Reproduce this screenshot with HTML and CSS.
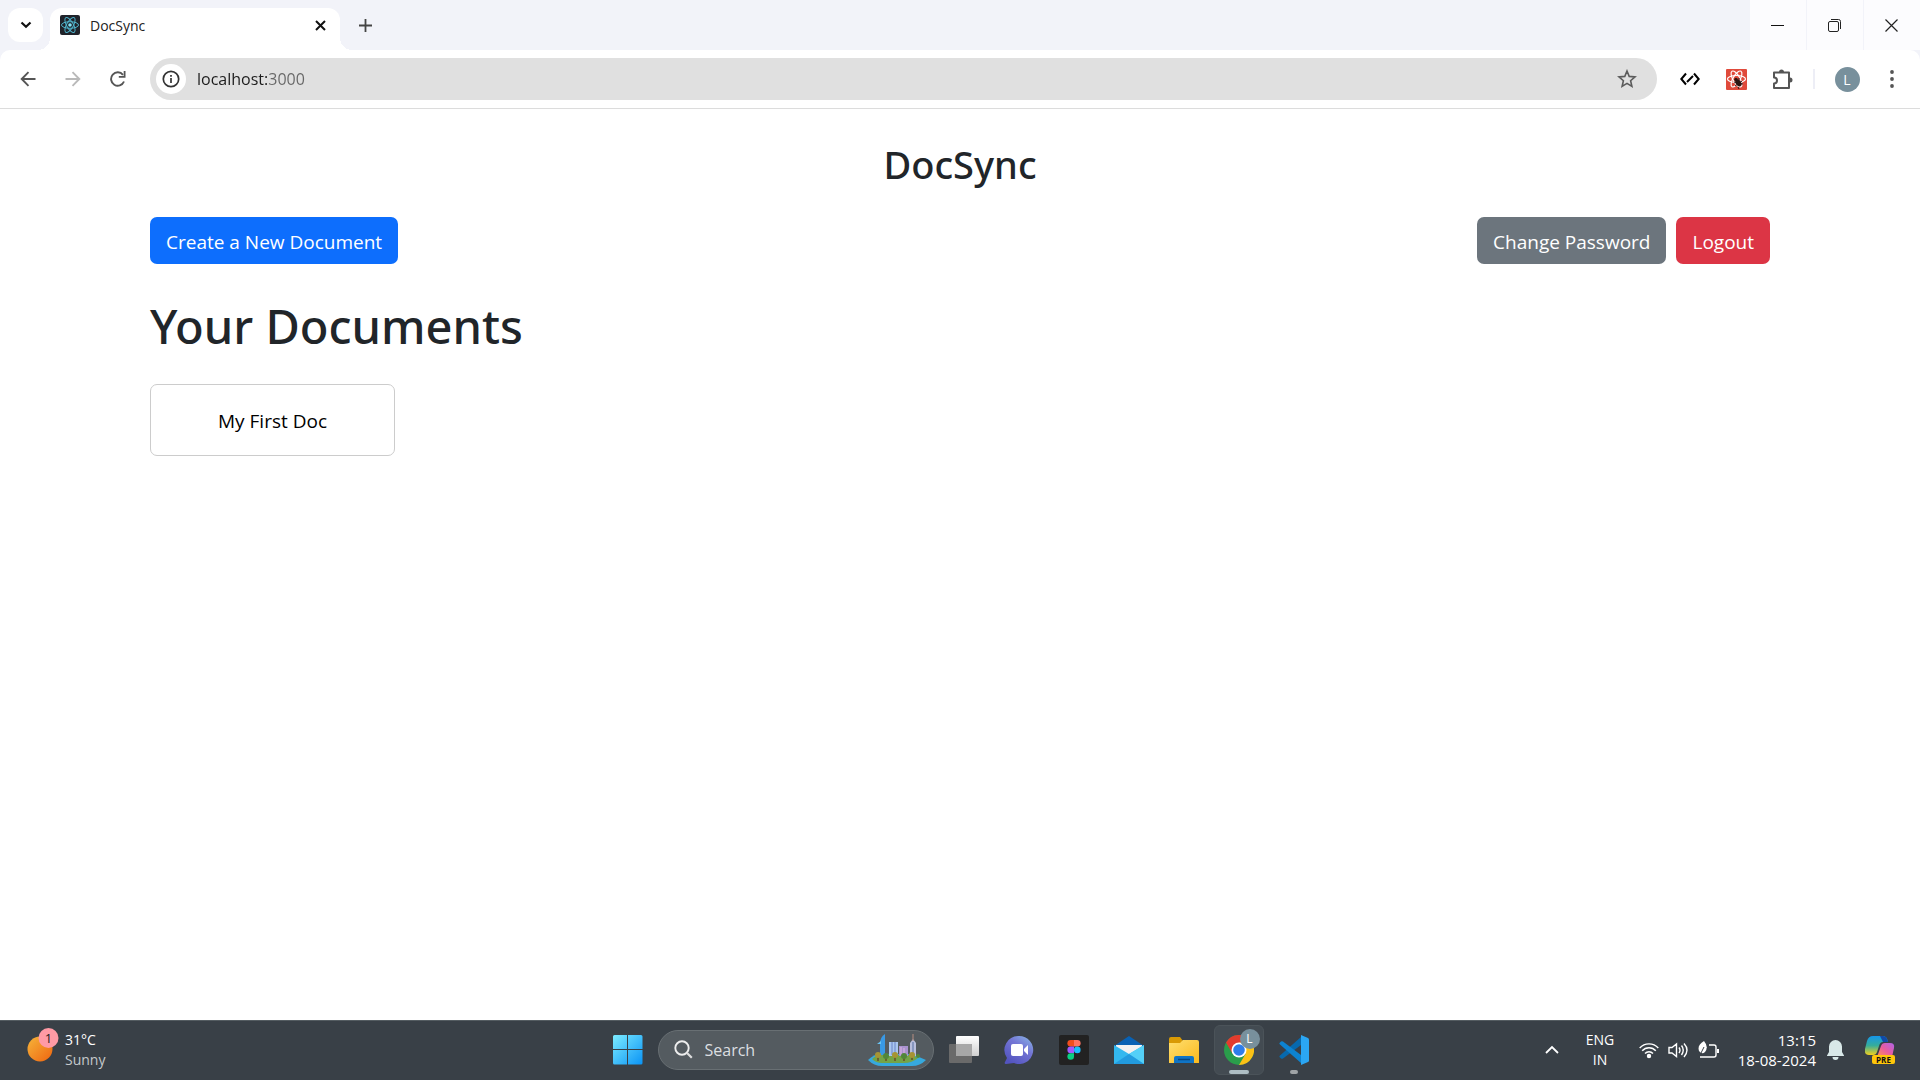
FILE: index.html
```html
<!DOCTYPE html>
<html lang="en">
<head>
<meta charset="utf-8">
<title>DocSync</title>
<link rel="stylesheet" href="styles.css">
</head>
<body>
<div class="screen">
  <header class="tab-strip">
    <button class="tab-search" aria-label="Search tabs"><svg width="12" height="8" viewBox="0 0 12 8"><path d="M1.5 1.5 6 5.8l4.500-4.300" fill="none" stroke="#111" stroke-width="2.200"/></svg></button>
    <div class="tab">
      <svg width="20" height="20" viewBox="0 0 20 20"><rect width="20" height="20" rx="2" fill="#20232a"/><g fill="none" stroke="#4fb3cb" stroke-width="1"><ellipse cx="10" cy="10" rx="8.500" ry="3.300"/><ellipse cx="10" cy="10" rx="8.500" ry="3.300" transform="rotate(60 10 10)"/><ellipse cx="10" cy="10" rx="8.500" ry="3.300" transform="rotate(120 10 10)"/></g><circle cx="10" cy="10" r="1.800" fill="#7fe0f5"/></svg>
      <span class="tab-title">DocSync</span>
      <button class="icon-button tab-close" aria-label="Close tab"><svg width="11" height="11" viewBox="0 0 11 11"><path d="M1 1l9 9M10 1l-9 9" stroke="#111" stroke-width="2"/></svg></button>
    </div>
    <button class="icon-button new-tab" aria-label="New tab"><svg width="13" height="13" viewBox="0 0 13 13"><path d="M6.500 0v13M0 6.500h13" stroke="#444" stroke-width="1.800"/></svg></button>
    <div class="window-controls">
      <button aria-label="Minimize"><svg width="13" height="13" viewBox="0 0 13 13"><path d="M0 6.500h13" stroke="#111"/></svg></button>
      <button aria-label="Restore"><svg width="13" height="13" viewBox="0 0 13 13" fill="none" stroke="#222"><rect x=".5" y="2.500" width="10" height="10" rx="1.500"/><path d="M3 .5h7.500a2 2 0 0 1 2 2V10"/></svg></button>
      <button aria-label="Close"><svg width="13" height="13" viewBox="0 0 13 13"><path d="M.5.5l12 12M12.500.5l-12 12" stroke="#222" stroke-width="1.200"/></svg></button>
    </div>
  </header>

  <div class="toolbar-back">
  <nav class="toolbar">
    <button class="icon-button nav-button" aria-label="Back"><svg width="16" height="16" viewBox="0 0 16 16"><path d="M15.500 8H2M8.500 1.200 1.700 8l6.800 6.800" fill="none" stroke="#555" stroke-width="1.900"/></svg></button>
    <button class="icon-button nav-button" aria-label="Forward"><svg width="16" height="16" viewBox="0 0 16 16"><path d="M.5 8H14M7.500 1.200 14.300 8l-6.800 6.800" fill="none" stroke="#b9b9b9" stroke-width="1.900"/></svg></button>
    <button class="icon-button nav-button" aria-label="Reload"><svg width="16" height="16" viewBox="0 0 16 16"><path d="M14 10.500A6.700 6.700 0 1 1 13 3.800" fill="none" stroke="#555" stroke-width="1.900"/><path d="M15.500 0v6.700H8.800V4.900h4.900V0z" fill="#555"/></svg></button>
    <div class="omnibox">
      <button class="site-info" aria-label="Site information"><svg width="18" height="18" viewBox="0 0 18 18"><circle cx="9" cy="9" r="7.700" fill="none" stroke="#333" stroke-width="1.700"/><path d="M9 8v5M9 5v1.700" stroke="#333" stroke-width="1.700"/></svg></button>
      <input class="address" type="text" aria-label="Address" value="localhost:3000">
      <button class="icon-button bookmark" aria-label="Bookmark"><svg width="20" height="20" viewBox="0 0 20 20"><path d="M10 2l2.200 5.400 5.800.5-4.400 3.800 1.300 5.700L10 14.400l-4.900 3 1.300-5.700L2 7.900l5.800-.5z" fill="none" stroke="#5c5c5c" stroke-width="1.600"/></svg></button>
    </div>
    <div class="extensions">
      <button class="icon-button extension" aria-label="Inspect"><svg width="20" height="14" viewBox="0 0 20 14"><path d="M6 1.500 1.300 7 6 12.500M14 1.500l4.700 5.500-4.700 5.500" fill="none" stroke="#000" stroke-width="2"/><path d="M7 10l6-6" fill="none" stroke="#000" stroke-width="2"/></svg></button>
      <button class="icon-button extension" aria-label="React Developer Tools"><svg width="21" height="21" viewBox="0 0 21 21"><rect width="21" height="21" rx="1" fill="#e04a3b"/><g fill="none" stroke="#fff" stroke-width="1.200"><ellipse cx="10.500" cy="10" rx="9" ry="3.500"/><ellipse cx="10.500" cy="10" rx="9" ry="3.500" transform="rotate(60 10.500 10)"/><ellipse cx="10.500" cy="10" rx="9" ry="3.500" transform="rotate(120 10.500 10)"/></g><ellipse cx="12.500" cy="14" rx="2.600" ry="3.800" transform="rotate(-35 12.500 14)" fill="#2b1512"/><circle cx="10" cy="10.500" r="1.800" fill="#2b1512"/><path d="M8 13l9 2M9 17l7-5M12 18l1 2M13 9v3" stroke="#2b1512"/></svg></button>
      <button class="icon-button extension" aria-label="Extensions"><svg width="21" height="21" viewBox="0 0 21 21"><path d="M2 3.500h15v15.500H2v-4.500a3 3 0 0 0 0-6z" fill="none" stroke="#555" stroke-width="2" stroke-linejoin="round"/><path d="M7 3a2.500 2.500 0 0 1 5 0M18 8.500a2.500 2.500 0 0 1 0 5" fill="#555"/></svg></button>
      <span class="divider"></span>
      <button class="icon-button profile" aria-label="Profile"><span class="avatar">L</span></button>
      <button class="icon-button menu" aria-label="Menu"><svg width="4" height="18" viewBox="0 0 4 18" fill="#555"><circle cx="2" cy="2" r="1.900"/><circle cx="2" cy="9" r="1.900"/><circle cx="2" cy="16" r="1.900"/></svg></button>
    </div>
  </nav>
  </div>

  <main class="page">
    <h2 class="brand">DocSync</h2>
    <div class="actions">
      <button class="btn btn-primary">Create a New Document</button>
      <div class="account">
        <button class="btn btn-secondary">Change Password</button>
        <button class="btn btn-danger">Logout</button>
      </div>
    </div>
    <h1 class="heading">Your Documents</h1>
    <div class="documents"><a class="document" href="#">My First Doc</a></div>
  </main>

  <footer class="taskbar">
    <button class="weather">
      <svg width="33" height="36" viewBox="0 0 33 36"><defs><linearGradient id="sun" x1="0" y1="0" x2="1" y2="1"><stop offset="0" stop-color="#f6b53a"/><stop offset="1" stop-color="#ee6410"/></linearGradient></defs><circle cx="13" cy="21" r="12.500" fill="url(#sun)"/><circle cx="21.500" cy="10" r="10" fill="#ff9aa5"/><text x="21.500" y="15" class="badge-text">1</text></svg>
      <span class="weather-text"><span>31°C</span><span class="muted">Sunny</span></span>
    </button>
    <div class="apps">
      <button class="app" aria-label="Start"><svg width="30" height="30" viewBox="0 0 30 30"><defs><linearGradient id="win" x1="0" y1="0" x2="1" y2="1"><stop offset="0" stop-color="#7cecff"/><stop offset="1" stop-color="#0a93f5"/></linearGradient></defs><path d="M0 1.500Q0 0 1.500 0H14v14H0zM15 0h13q1.500 0 1.500 1.500V14H15zM0 15h14v14.500H1.500Q0 29.500 0 28zM15 15h14.500v13q0 1.500-1.500 1.500H15z" fill="url(#win)"/></svg></button>
      <label class="search">
        <svg width="19" height="19" viewBox="0 0 19 19"><circle cx="8" cy="8" r="6.700" fill="none" stroke="#eee" stroke-width="1.900"/><path d="M12.800 12.800l5 5" stroke="#ddd" stroke-width="2.200"/></svg>
        <input type="search" placeholder="Search" aria-label="Search">
        <svg width="58" height="32" viewBox="0 0 58 32"><path d="M0 26q6-6 12-6h32l14 6q-6 6-14 6H14Q6 32 0 26" fill="#36a9de"/><path d="M4 25q4-4 10-4h30l6 3q-6 5-14 5H14q-6 0-10-4" fill="#74a447"/><path d="M12 21V10q0-7 5-10v21z" fill="#3999e5"/><path d="M9 10h4V7z" fill="#68c4f3"/><path d="M21 8h9v14h-9z" fill="#a9c7ef"/><path d="M24 8v13M27 8v13" stroke="#6a82c8"/><path d="M31 12h9v10h-9z" fill="#a993cf"/><path d="M33 13v8M36 14v7" stroke="#e1b6e5"/><path d="M42 22V9l3-4 3 4v13z" fill="#b8bedc"/><path d="M45 0v7" stroke="#b58e80"/><path d="M45 8v13" stroke="#7688b5" stroke-width="1.500"/><path d="M10 21v6M18 22v5M27 22v5M36 22v5M44 21v5" stroke="#674b29" stroke-width="1.500"/><g fill="#a69434"><circle cx="10" cy="21" r="3"/><circle cx="27" cy="21" r="3"/><circle cx="44" cy="21" r="3"/></g><g fill="#52863a"><circle cx="18" cy="22" r="3"/><circle cx="36" cy="22" r="3"/><circle cx="50" cy="22" r="2"/></g></svg>
      </label>
      <button class="app" aria-label="Task view"><svg width="30" height="30" viewBox="0 0 30 30"><defs><linearGradient id="pane" x1="0" y1="0" x2="0" y2="1"><stop offset="0" stop-color="#fff"/><stop offset="1" stop-color="#cfcfcf"/></linearGradient></defs><rect y="9" width="23" height="19" rx="1" fill="#6a6a6a"/><rect x="7" y="1" width="23" height="20" rx="1" fill="url(#pane)"/><path d="M7 9h16v12H7z" fill="#a7a7a7"/></svg></button>
      <button class="app" aria-label="Chat"><svg width="30" height="30" viewBox="0 0 30 30"><defs><linearGradient id="chat" x1="1" y1="0" x2=".3" y2="1"><stop offset="0" stop-color="#8abbe8"/><stop offset=".45" stop-color="#7476d5"/><stop offset="1" stop-color="#5354bf"/></linearGradient></defs><path d="M15 1a14 14 0 1 1-5 27l-8 1q-2 0-1-2l2-4A14 14 0 0 1 15 1" fill="url(#chat)"/><rect x="7" y="9" width="12" height="12" rx="2" fill="#fff"/><path d="M20 14l4-4v10l-4-4z" fill="#fff"/></svg></button>
      <button class="app" aria-label="Figma"><svg width="30" height="30" viewBox="0 0 30 30"><rect width="30" height="30" rx="2" fill="#222"/><path d="M15 5h-3.300a3.300 3.300 0 0 0 0 6.600H15z" fill="#f24e1e"/><path d="M15 5h3.300a3.300 3.300 0 0 1 0 6.600H15z" fill="#ff7262"/><path d="M15 11.600h-3.300a3.300 3.300 0 0 0 0 6.600H15z" fill="#a259ff"/><circle cx="18.300" cy="14.900" r="3.300" fill="#1abcfe"/><path d="M15 18.200h-3.300a3.300 3.300 0 1 0 3.300 3.300z" fill="#0acf83"/></svg></button>
      <button class="app" aria-label="Mail"><svg width="30" height="30" viewBox="0 0 30 30"><path d="M0 11 15 1l15 10v4H0z" fill="#0861b4"/><path d="M2 10h26v10H2z" fill="#f1f1f1"/><path d="M0 10l15 9L30 10v19H0z" fill="#33b8ef"/><path d="M15 19 30 10v19z" fill="#54d0f8"/><path d="M0 29l15-10 15 10z" fill="#229bdf"/></svg></button>
      <button class="app" aria-label="File Explorer"><svg width="30" height="30" viewBox="0 0 30 30"><defs><linearGradient id="folder" x1="0" y1="0" x2="1" y2="1"><stop offset="0" stop-color="#ffdf70"/><stop offset="1" stop-color="#fbb91c"/></linearGradient></defs><path d="M0 4q0-2 2-2h9l3 4v6H0z" fill="#d99a05"/><path d="M0 8h11l3-3h14q2 0 2 2v21H0z" fill="url(#folder)"/><path d="M5 28v-5q0-2 2-2h16q2 0 2 2v5z" fill="#1074c5"/><path d="M9 24.500h12" stroke="#064782" stroke-width="1.500"/></svg></button>
      <button class="app app-active" aria-label="Google Chrome"><svg width="30" height="30" viewBox="0 0 30 30"><circle cx="15" cy="15" r="15" fill="#2a9d4b"/><path d="M15 15 2 7.500A15 15 0 0 1 28 7.500z" fill="#e33b2e"/><path d="M15 7.500h13A15 15 0 0 1 15 30l6.500-11z" fill="#fbc116"/><path d="M2 7.500 8.500 18.800 15 7.500z" fill="#e33b2e"/><circle cx="15" cy="15" r="7.500" fill="#fff"/><circle cx="15" cy="15" r="5.800" fill="#2f7de9"/></svg><span class="app-badge">L</span></button>
      <button class="app app-running" aria-label="Visual Studio Code"><svg width="30" height="30" viewBox="0 0 30 30"><path d="M1 20.500 22 2v8L4 23.500q-1 .5-2 0L.5 22q-.5-.8.5-1.500" fill="#0769ad"/><path d="M1 9.500 22 28v-8L4 6.500q-1-.5-2 0L.5 8q-.5.8.5 1.500" fill="#0d83d0"/><path d="M22 0l7 3q1 .5 1 1.500v21q0 1-1 1.500l-7 3z" fill="#2ba6f3"/></svg></button>
    </div>
    <div class="tray">
      <button class="tray-button overflow" aria-label="Show hidden icons"><svg width="14" height="9" viewBox="0 0 14 9"><path d="M1 8l6-6 6 6" fill="none" stroke="#fff" stroke-width="1.800"/></svg></button>
      <button class="tray-button language"><span>ENG</span><span>IN</span></button>
      <button class="tray-button status" aria-label="Network, volume and battery">
        <svg width="20" height="18" viewBox="0 0 20 18" fill="none" stroke="#fff" stroke-width="1.400"><path d="M.7 7a12.500 12.500 0 0 1 18.600 0M3.200 9.800a9 9 0 0 1 13.600 0M6 12.500a5.400 5.400 0 0 1 8 0"/><circle cx="10" cy="15" r="1.500" fill="#fff"/></svg>
        <svg width="21" height="18" viewBox="0 0 21 18" fill="none" stroke="#fff" stroke-width="1.400"><path d="M1 6.500h3L8.500 3v12.500L4 12H1zM11 6.500q2 2.700 0 5.500M13.500 4.500q3.500 4.500 0 9.500M16 2.500q6 6.500 0 13.500"/></svg>
        <svg width="21" height="18" viewBox="0 0 21 18"><path d="M11 4h5q2 0 2 2v8q0 2-2 2H2" fill="none" stroke="#fff" stroke-width="1.400"/><path d="M19 8h2v4h-2z" fill="#fff"/><path d="M1 10Q-1 4 6 0q5 6 1 11-3 3-6-1" fill="#fff"/><path d="M2 14 6 6" stroke="#394047"/></svg>
      </button>
      <button class="tray-button clock"><span>13:15</span><span>18-08-2024</span></button>
      <button class="tray-button bell" aria-label="Notifications"><svg width="17" height="20" viewBox="0 0 17 20" fill="#d8e8e8"><path d="M8.500 0a6.500 6.500 0 0 1 6.500 6.500V12l2 3.500V16H0v-.5L2 12V6.500A6.500 6.500 0 0 1 8.500 0M5.500 17h6a3 3 0 0 1-6 0"/></svg></button>
      <button class="tray-button copilot" aria-label="Copilot"><svg width="30" height="30" viewBox="0 0 30 30"><defs><linearGradient id="cl" x1="0" y1="0" x2="0" y2="1"><stop offset="0" stop-color="#1596ea"/><stop offset=".5" stop-color="#35ad9b"/><stop offset="1" stop-color="#f2d01d"/></linearGradient><linearGradient id="cr" x1="1" y1="0" x2="0" y2="1"><stop offset="0" stop-color="#ae64e9"/><stop offset=".5" stop-color="#ea5c9e"/><stop offset="1" stop-color="#ff944f"/></linearGradient></defs><path d="M8 1h10q4 0 5 6h-5q-3 0-4 4l-2 6q-1 3-4 3H4q-5 0-4-6l2-8q1.500-5 6-5" fill="url(#cl)"/><path d="M15 1h3q4 0 5 6h-5z" fill="#124aa7"/><path d="M20 8h5q5 0 4 5l-2 9H12l4-11q1-3 4-3" fill="url(#cr)"/><rect x="7" y="20" width="23" height="9" rx="2" fill="#ffc60a"/><text x="18.500" y="27.500" class="pre-text">PRE</text></svg></button>
    </div>
  </footer>
</div>
</body>
</html>
```
FILE: styles.css
```css
* { box-sizing: border-box; }
body { margin: 0; background: #fff; color: #212529; font-family: "Open Sans", "Noto Sans", sans-serif; }
button, input { margin: 0; padding: 0; border: 0; background: none; color: inherit; font: inherit; outline: 0; }
svg { display: block; flex: none; }
.screen { min-height: 100vh; display: flex; flex-direction: column; }
.icon-button { display: flex; align-items: center; justify-content: center; flex: none; height: 34px; }

/* Browser tabs */
.tab-strip { display: flex; align-items: flex-end; height: 50px; padding-left: 8px; background: #f2f3f9; }
.tab-search { display: flex; align-items: center; justify-content: center; width: 35px; height: 34px; margin-bottom: 8px; border-radius: 12px; background: #fff; }
.tab { position: relative; display: flex; align-items: center; gap: 10px; width: 290px; height: 42px; margin-left: 7px; padding: 0 8px 8px 10px; border-radius: 12px 12px 0 0; background: #fff; }
.tab::before, .tab::after { content: ""; position: absolute; bottom: 0; width: 12px; height: 12px; }
.tab::before { right: 100%; background: radial-gradient(circle at 0 0, transparent 12px, #fff 12px); }
.tab::after { left: 100%; background: radial-gradient(circle at 100% 0, transparent 12px, #fff 12px); }
.tab-title { flex: 1; font-size: 14px; color: #222; }
.tab-close { width: 24px; }
.new-tab { width: 34px; margin: 0 0 8px 8px; }
.window-controls { display: flex; height: 50px; margin-left: auto; gap: 1px; }
.window-controls button { display: flex; align-items: center; justify-content: center; width: 56px; padding-right: 2px; background: #fcfcfe; }

/* Address bar */
.toolbar-back { background: #f2f3f9; }
.toolbar { display: flex; align-items: center; height: 59px; padding: 0 7px 0 5px; border-bottom: 1px solid #dcdcdc; border-radius: 10px 10px 0 0; background: #fff; }
.nav-button { width: 45px; }
.omnibox { display: flex; align-items: center; flex: 1; height: 42px; margin: 0 10px; padding: 0 8px 0 6px; border-radius: 21px; background: #e0e0e0; }
.site-info { display: flex; align-items: center; justify-content: center; flex: none; width: 30px; height: 30px; border-radius: 50%; background: #fff; }
.address { flex: 1; min-width: 0; height: 30px; margin-left: 11px; font-size: 16px; color: transparent; background: linear-gradient(90deg, #1c1c1c 72px, #666 72px); background-clip: text; }
.bookmark { width: 44px; }
.extensions { display: flex; align-items: center; }
.extension { width: 46px; }
.divider { width: 2px; height: 20px; margin: 0 8px; background: #edeef6; }
.profile { width: 48px; }
.avatar { display: flex; align-items: center; justify-content: center; width: 25px; height: 25px; border-radius: 50%; background: #78909c; color: #fff; font-size: 14px; }
.menu { width: 42px; }

/* Document page */
.page { flex: 1; padding: 31px 150px; }
.brand, .heading { font-family: "Noto Sans", "Open Sans", sans-serif; font-weight: 500; }
.brand { margin: 0; font-size: 38px; line-height: 48px; text-align: center; }
.actions { display: flex; justify-content: space-between; margin-top: 29px; }
.account { display: flex; gap: 10px; }
.btn { height: 47px; padding: 2px 16px 0; border-radius: 7px; color: #fff; font-size: 19px; line-height: 30px; white-space: nowrap; }
.btn-primary { background: #0d6efd; }
.btn-secondary { background: #6c757d; }
.btn-danger { background: #dc3545; }
.heading { margin: 32px 0 0; font-size: 47px; line-height: 60px; }
.documents { display: flex; flex-wrap: wrap; gap: 20px; margin-top: 28px; }
.document { display: flex; align-items: center; justify-content: center; width: 245px; height: 72px; padding-top: 2px; border: 1px solid #ccc; border-radius: 7px; color: #000; font-size: 19px; text-decoration: none; }

/* Desktop taskbar */
.taskbar { display: grid; grid-template-columns: 1fr auto 1fr; align-items: center; height: 60px; padding: 0 0 2px 1px; border-top: 1px solid #545c61; background: #394047; color: #fff; font-size: 14px; line-height: 20px; }
.weather { display: flex; align-items: center; gap: 5px; padding-left: 26px; text-align: left; }
.weather svg { margin-bottom: 8px; }
.weather-text, .language, .clock { display: flex; flex-direction: column; }
.muted { color: #c5c9cc; }
.badge-text { fill: #222; font-size: 13px; text-anchor: middle; }
.apps { display: flex; align-items: center; gap: 5px; }
.app { position: relative; display: flex; align-items: center; justify-content: center; width: 50px; height: 50px; border-radius: 6px; }
.app-active { border: 1px solid #4b5359; background: #434b52; }
.app-active::after, .app-running::after { content: ""; position: absolute; bottom: 1px; left: 50%; width: 8px; height: 4px; margin-left: -4px; border-radius: 2px; background: #9fa3a6; }
.app-active::after { bottom: 0; width: 20px; margin-left: -10px; background: #adbdc3; }
.app-badge { position: absolute; top: 3px; right: 3px; width: 20px; height: 20px; border-radius: 50%; background: #78909c; font-size: 12px; }
.search { display: flex; align-items: center; width: 276px; height: 40px; padding: 0 7px 0 15px; border: 1px solid #686f73; border-radius: 20px; background: #545b60; }
.search input { flex: 1; min-width: 0; margin-left: 12px; font-size: 16px; }
.search input::placeholder { color: #dcdfe0; opacity: 1; }
.tray { display: flex; align-items: center; justify-content: flex-end; padding-right: 25px; }
.tray-button { display: flex; align-items: center; justify-content: center; }
.overflow { width: 40px; }
.language { width: 56px; align-items: center; }
.status { gap: 9px; margin: 0 8px 0 4px; padding: 0 7px; }
.clock { width: 82px; align-items: flex-end; font-size: 15px; }
.bell { width: 38px; }
.copilot { margin-left: 11px; }
.pre-text { fill: #111; font-size: 8px; font-weight: 700; text-anchor: middle; }
```
